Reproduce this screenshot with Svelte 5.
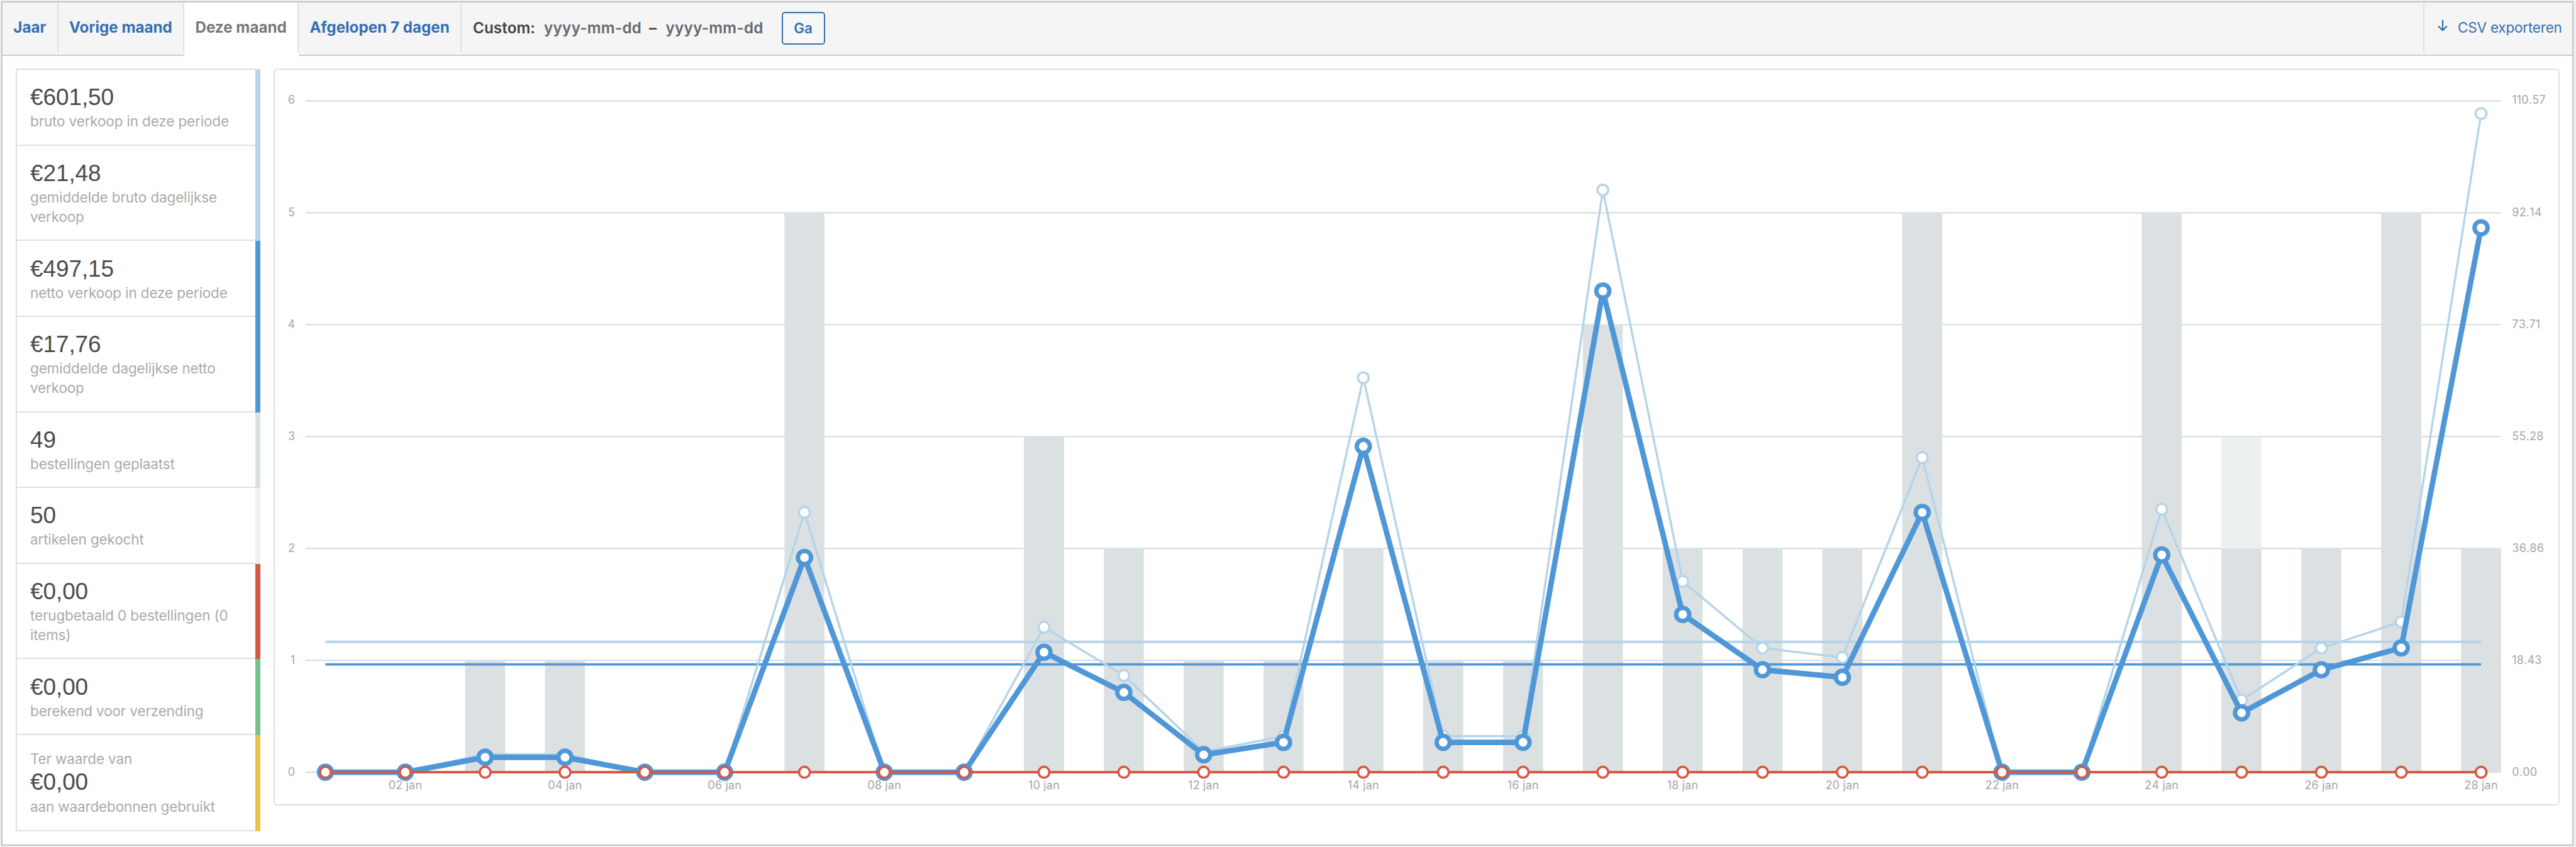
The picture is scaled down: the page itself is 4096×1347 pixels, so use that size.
<script lang="ts">
  type Stat = { before?: string; value: string; label: string; color: string };

  const tabs = ["Jaar", "Vorige maand", "Deze maand", "Afgelopen 7 dagen"];
  const activeTab = "Deze maand";

  const colors = {
    gross: "#b5d4e9",
    net: "#4f97d7",
    orders: "#dbe1e3",
    items: "#ecf0f1",
    refunds: "#d65744",
    shipping: "#73c08d",
    coupons: "#e9c446",
  };

  const stats: Stat[] = [
    { value: "€601,50", label: "bruto verkoop in deze periode", color: colors.gross },
    { value: "€21,48", label: "gemiddelde bruto dagelijkse verkoop", color: colors.gross },
    { value: "€497,15", label: "netto verkoop in deze periode", color: colors.net },
    { value: "€17,76", label: "gemiddelde dagelijkse netto verkoop", color: colors.net },
    { value: "49", label: "bestellingen geplaatst", color: colors.orders },
    { value: "50", label: "artikelen gekocht", color: colors.items },
    { value: "€0,00", label: "terugbetaald 0 bestellingen (0 items)", color: colors.refunds },
    { value: "€0,00", label: "berekend voor verzending", color: colors.shipping },
    { before: "Ter waarde van", value: "€0,00", label: "aan waardebonnen gebruikt", color: colors.coupons },
  ];

  // one entry per day, 1 - 28 january
  const orders = [0, 0, 1, 1, 0, 0, 5, 0, 0, 3, 2, 1, 1, 2, 1, 1, 4, 2, 2, 2, 5, 0, 0, 5, 2, 2, 5, 2];
  const items = orders.map((n, i) => (i === 24 ? 3 : n));
  const gross = [
    0, 0, 2.96, 2.96, 0, 0, 42.8, 0, 0, 23.88, 15.93, 3.41, 5.9, 64.97, 5.94, 5.94, 95.9, 31.44, 20.44, 18.92, 51.82, 0,
    0, 43.32, 11.87, 20.44, 24.77, 108.49,
  ];
  const net = [
    0, 0, 2.45, 2.45, 0, 0, 35.36, 0, 0, 19.76, 13.15, 2.87, 4.91, 53.68, 4.92, 4.92, 79.26, 25.99, 16.87, 15.63, 42.8,
    0, 0, 35.79, 9.78, 16.87, 20.47, 89.67,
  ];
  const refunds = orders.map(() => 0);

  const series = [
    { values: gross, color: colors.gross, width: 2, radius: 5, ring: 2 },
    { values: net, color: colors.net, width: 5, radius: 6, ring: 4 },
    { values: refunds, color: colors.refunds, width: 2.3, radius: 5, ring: 2.1 },
  ];

  const amounts = ["0.00", "18.43", "36.86", "55.28", "73.71", "92.14", "110.57"];

  const left = 28;
  const right = 2042.5;
  const zero = 644.6;
  const rowHeight = 102.67;
  const step = 73.255;
  const barWidth = step / 2;

  const x = (day: number) => 46.45 + day * step;
  const yCount = (n: number) => zero - n * rowHeight;
  const yMoney = (amount: number) => zero - (amount / 110.57) * 6 * rowHeight;
  const points = (values: number[]) => values.map((v, i) => `${x(i)},${yMoney(v)}`).join(" ");
  const labelY = (n: number) => yCount(n) + (n === 6 ? 2.6 : 3.4);
  const dayLabel = (i: number) => `${String(i + 1).padStart(2, "0")} jan`;
</script>

<div class="page">
  <div class="postbox">
    <div class="stats-range">
      <ul class="tabs">
        {#each tabs as tab}
          <li class={{ active: tab === activeTab }}><a href="#{tab}">{tab}</a></li>
        {/each}
      </ul>
      <form class="custom">
        <span class="custom-label">Custom:</span>
        <input class="from" type="text" placeholder="yyyy-mm-dd" />
        <span class="dash">–</span>
        <input class="to" type="text" placeholder="yyyy-mm-dd" />
        <button type="button">Ga</button>
      </form>
      <a class="export" href="#csv">
        <svg viewBox="0 0 16 19" width="16" height="19">
          <path d="M8 0.5V17M1.2 10.6L8 17.2L14.8 10.6" fill="none" stroke="currentColor" stroke-width="2.2" />
        </svg>
        <span>CSV exporteren</span>
      </a>
    </div>

    <div class="inside">
      <ul class="legend">
        {#each stats as stat}
          <li>
            <div class="stat">
              {#if stat.before}<p>{stat.before}</p>{/if}
              <strong>{stat.value}</strong>
              <p class={{ last: stat.before }}>{stat.label}</p>
            </div>
            <span class="swatch" style:background={stat.color}></span>
          </li>
        {/each}
      </ul>

      <div class="chart">
        <svg viewBox="0 0 2095 674" preserveAspectRatio="xMinYMin meet">
          {#each amounts as amount, n}
            <line class="grid" x1={left} x2={right} y1={yCount(n)} y2={yCount(n)} />
            <text x="18.6" y={labelY(n)} text-anchor="end">{n}</text>
            <text x="2052.8" y={labelY(n)}>{amount}</text>
          {/each}

          {#each items as n, i}
            {#if n}
              <rect x={x(i) - barWidth / 2} y={yCount(n)} width={barWidth} height={n * rowHeight} fill={colors.items} />
            {/if}
          {/each}
          {#each orders as n, i}
            {#if n}
              <rect x={x(i) - barWidth / 2} y={yCount(n)} width={barWidth} height={n * rowHeight} fill={colors.orders} />
            {/if}
          {/each}

          <line x1={x(0)} x2={x(27)} y1={yMoney(21.48)} y2={yMoney(21.48)} stroke={colors.gross} stroke-width="2.3" />
          <line x1={x(0)} x2={x(27)} y1={yMoney(17.76)} y2={yMoney(17.76)} stroke={colors.net} stroke-width="2.2" />

          {#each series as s}
            <polyline points={points(s.values)} fill="none" stroke={s.color} stroke-width={s.width} />
            {#each s.values as v, i}
              <circle cx={x(i)} cy={yMoney(v)} r={s.radius} fill="#fff" stroke={s.color} stroke-width={s.ring} />
            {/each}
          {/each}

          {#each orders as _, i}
            {#if i % 2}
              <text x={x(i)} y="660" text-anchor="middle">{dayLabel(i)}</text>
            {/if}
          {/each}
        </svg>
      </div>
    </div>
  </div>
</div>

<style>
  :global(body) {
    background: #eeeeef;
  }
  ul {
    list-style: none;
    margin: 0;
    padding: 0;
  }
  p {
    margin: 0;
  }
  a {
    color: #3470b0;
    text-decoration: none;
  }

  .page {
    box-sizing: border-box;
    height: 1347px;
    padding: 2px 4px 2px 2px;
    font-family: Inter, "Liberation Sans", sans-serif;
    font-size: 22.5px;
  }
  .postbox {
    box-sizing: border-box;
    height: 100%;
    border: 2px solid #c3c4c9;
    background: #fff;
  }

  .stats-range {
    display: flex;
    align-items: flex-start;
    box-sizing: border-box;
    height: 84.5px;
    border-bottom: 2px solid #ccc;
    background: #f5f5f5;
  }
  .tabs {
    display: flex;
    align-items: flex-start;
    font-size: 24.2px;
    font-weight: 700;
    line-height: 79px;
  }
  .tabs a {
    display: block;
    box-sizing: border-box;
    height: 79.5px;
    padding: 0 17.3px;
    border-right: 2px solid #dfdfdf;
    white-space: nowrap;
  }
  .active {
    height: 84.5px;
    background: #fff;
  }
  .active a {
    color: #777;
  }

  .custom {
    display: flex;
    height: 82px;
    padding-left: 18px;
    font-size: 24.2px;
    font-weight: 600;
    line-height: 82px;
    color: #3c434a;
  }
  .custom-label {
    width: 113px;
    letter-spacing: 0.1px;
  }
  .custom input {
    box-sizing: border-box;
    height: 82px;
    padding: 0;
    border: 0;
    background: none;
    font: inherit;
    letter-spacing: 0.3px;
  }
  .custom input::placeholder {
    color: #646970;
    opacity: 1;
  }
  .from {
    width: 167px;
  }
  .dash {
    width: 26.5px;
  }
  .to {
    width: 184px;
  }
  button {
    box-sizing: border-box;
    width: 69px;
    height: 52px;
    margin-top: 15px;
    padding: 0;
    border: 2px solid #3470b0;
    border-radius: 5px;
    background: #f6f7f7;
    color: #3470b0;
    font: 600 22.5px / 48px Inter, sans-serif;
  }

  .export {
    display: flex;
    box-sizing: border-box;
    width: 237px;
    height: 79.5px;
    margin-left: auto;
    padding-left: 21px;
    border-left: 2px solid #dfdfdf;
    line-height: 80px;
    letter-spacing: -0.2px;
    white-space: nowrap;
  }
  .export svg {
    margin: 27px 16px 0 0;
  }

  .inside {
    display: flex;
    align-items: flex-start;
    gap: 21px;
    padding: 20.7px 20px 0 20.5px;
  }
  .legend {
    box-sizing: border-box;
    width: 389.8px;
    border-top: 2px solid #dfdfdf;
  }
  .legend li {
    display: flex;
  }
  .stat {
    flex: 1;
    padding: 22.3px 20px 21.3px 21.5px;
    border-left: 2px solid #dfdfdf;
    border-bottom: 2px solid #dfdfdf;
    color: #aaa;
    line-height: 31px;
    letter-spacing: -0.15px;
  }
  .stat strong {
    display: block;
    color: #4c4c4c;
    font: 400 37px / 44px "Liberation Sans", sans-serif;
    font-kerning: none;
    letter-spacing: -0.1px;
  }
  .last {
    padding-top: 1px;
  }
  .swatch {
    width: 8.7px;
  }

  .chart {
    flex: 1;
    box-sizing: border-box;
    height: 1172px;
    border: 2px solid #dfdfdf;
    border-radius: 6px;
  }
  .chart svg {
    display: block;
    width: 100%;
    height: 100%;
  }
  .chart text {
    fill: #a6a6a6;
    font-size: 10.4px;
    font-kerning: none;
    letter-spacing: 0.1px;
  }
  .grid {
    stroke: #d4d8dc;
    stroke-width: 1.1;
  }
</style>
